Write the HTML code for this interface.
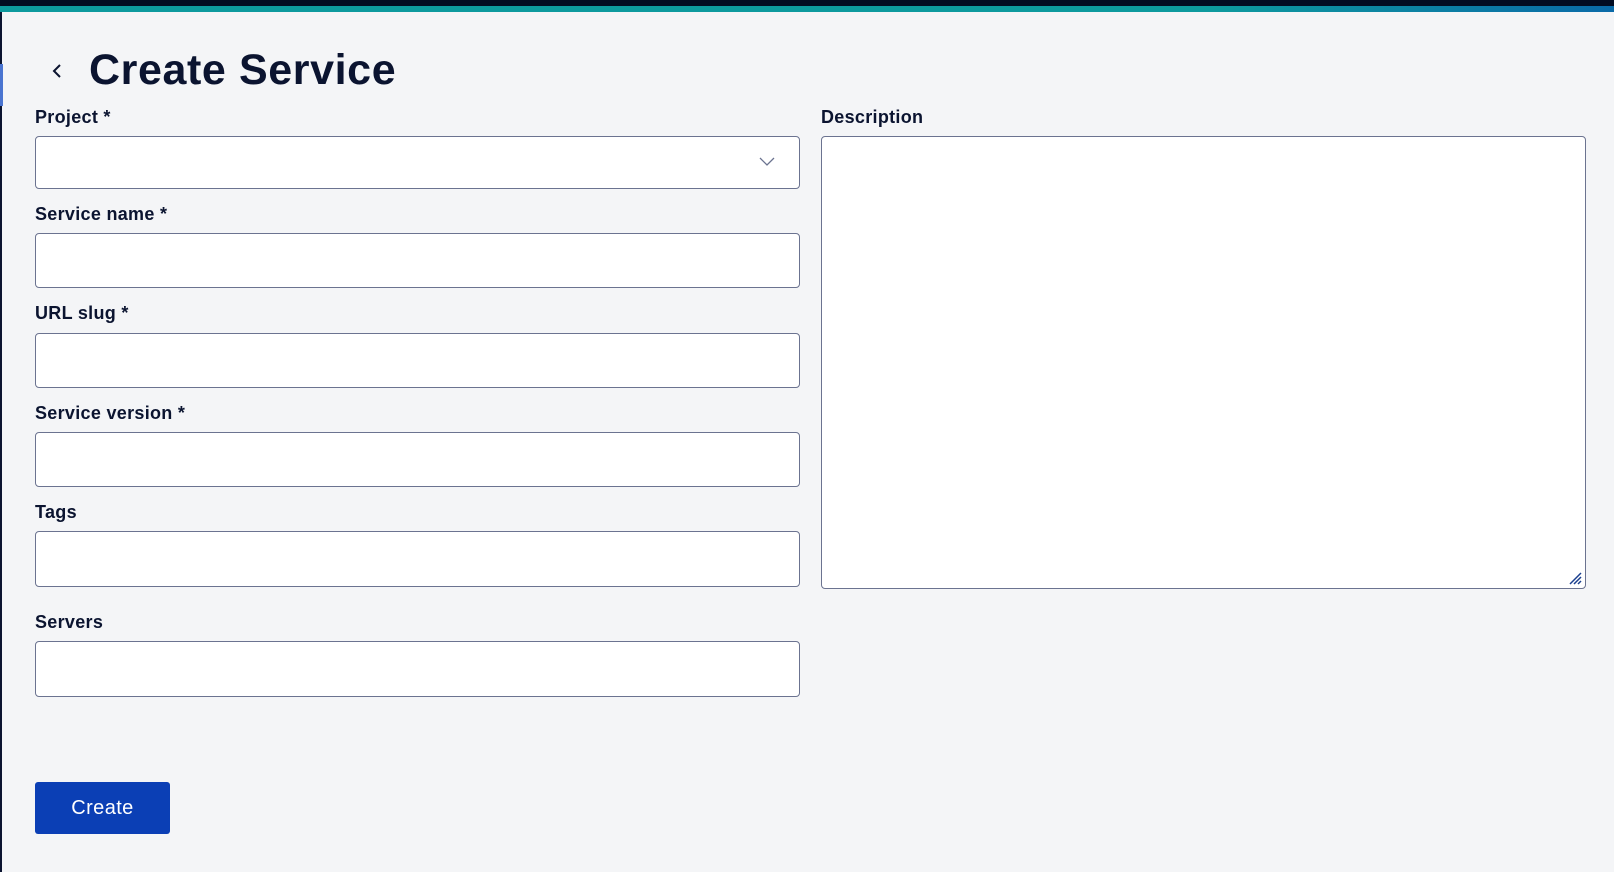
<!DOCTYPE html>
<html><head><style>
*{box-sizing:border-box;margin:0;padding:0}
body{width:1614px;height:872px;background:#f4f5f7;font-family:"Liberation Sans",sans-serif;color:#0b1430;position:relative;overflow:hidden}
.top{position:absolute;left:0;top:0;width:1614px;height:6px;background:#020c22}
.teal{position:absolute;left:0;top:6px;width:1614px;height:6px;background:linear-gradient(90deg,#0d9a9e 0%,#0d9a9e 75%,#0a6aa8 100%)}
.lb{position:absolute;left:0;top:12px;width:2px;height:860px;background:#0b1430}
.lbb{position:absolute;left:0;top:64px;width:3px;height:42px;background:#4a74d0}
h1{position:absolute;left:89px;top:46px;font-size:43px;font-weight:bold;letter-spacing:.6px}
.back{position:absolute;left:50px;top:62px}
label{position:absolute;font-size:18px;font-weight:bold;color:#0b1430;letter-spacing:.3px}
.in{position:absolute;background:#fff;border:1px solid #6b7390;border-radius:4px}
.btn{position:absolute;left:35px;top:782px;width:135px;height:52px;background:#0b3fb5;color:#fff;border-radius:3px;font-size:20px;letter-spacing:.4px;display:flex;align-items:center;justify-content:center}
</style></head><body>
<div class="top"></div><div class="teal"></div><div class="lb"></div><div class="lbb"></div>
<svg class="back" width="16" height="18" viewBox="0 0 16 18"><path d="M10 3 L4 9 L10 15" fill="none" stroke="#0b1430" stroke-width="2"/></svg>
<h1>Create Service</h1>
<label style="left:35px;top:107px">Project *</label>
<div class="in" style="left:35px;top:136px;width:765px;height:53px"><svg style="position:absolute;right:24px;top:20px" width="16" height="10" viewBox="0 0 16 10"><path d="M1 1 L8 8 L15 1" fill="none" stroke="#6b7390" stroke-width="1.3"/></svg></div>
<label style="left:35px;top:204px">Service name *</label>
<div class="in" style="left:35px;top:233px;width:765px;height:55px"></div>
<label style="left:35px;top:303px">URL slug *</label>
<div class="in" style="left:35px;top:333px;width:765px;height:55px"></div>
<label style="left:35px;top:403px">Service version *</label>
<div class="in" style="left:35px;top:432px;width:765px;height:55px"></div>
<label style="left:35px;top:502px">Tags</label>
<div class="in" style="left:35px;top:531px;width:765px;height:56px"></div>
<label style="left:35px;top:612px">Servers</label>
<div class="in" style="left:35px;top:641px;width:765px;height:56px"></div>
<label style="left:821px;top:107px">Description</label>
<div class="in" style="left:821px;top:136px;width:765px;height:453px"><svg style="position:absolute;right:3px;bottom:3px" width="14" height="14" viewBox="0 0 14 14"><path d="M2 13 L13 2 M6 13 L13 6 M10 13 L13 10" stroke="#1a3f8f" stroke-width="1.5"/></svg></div>
<div class="btn">Create</div>
</body></html>
